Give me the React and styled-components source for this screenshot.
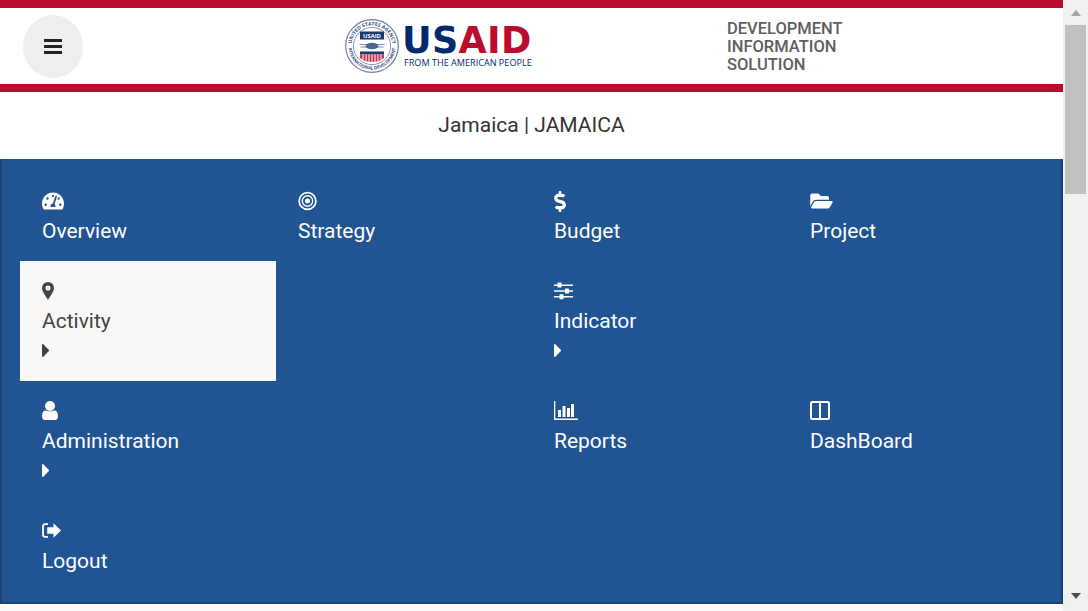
import React from 'react'
import styled, { createGlobalStyle } from 'styled-components'
import { FaTachometerAlt, FaDollarSign, FaFolderOpen } from 'react-icons/fa'

const GlobalStyle = createGlobalStyle`
  html, body {
    margin: 0;
    padding: 0;
    height: 100%;
    overflow: hidden;
    background: #fff;
    font-family: Roboto, "Liberation Sans", sans-serif;
  }
`

const Page = styled.div`
  display: flex;
  width: 1088px;
  height: 611px;
  overflow: hidden;
`

const Main = styled.main`
  width: 1063px;
  background: #fff;
`

const Header = styled.header`
  display: flex;
  align-items: center;
  height: 76px;
  border-top: 8px solid #ba0c2f;
  border-bottom: 8px solid #ba0c2f;
`

const MenuButton = styled.button`
  display: flex;
  align-items: center;
  justify-content: center;
  flex: none;
  width: 60px;
  height: 63px;
  margin-left: 23px;
  padding: 0;
  border: 0;
  border-radius: 50%;
  background: #eee;
`

const Logo = styled.div`
  display: flex;
  align-items: center;
  gap: 5px;
  width: 188px;
  margin-left: 262px;
`

const LogoWords = styled.div`
  display: flex;
  flex-direction: column;
  margin-top: 1px;
`

const LogoMark = styled.span`
  margin-left: -2px;
  font-family: "DejaVu Sans", "Liberation Sans", sans-serif;
  font-size: 36.5px;
  font-weight: 700;
  line-height: 32px;
  letter-spacing: 0.3px;
  color: #002a6c;

  b {
    font-weight: 700;
    color: #ba0c2f;
  }
`

const LogoTag = styled.span`
  font-family: "Open Sans", "Liberation Sans", sans-serif;
  font-size: 9.1px;
  line-height: 11px;
  white-space: nowrap;
  color: #002a6c;
`

const Solution = styled.div`
  width: 130px;
  margin-top: 2px;
  margin-left: 194px;
  font-size: 16.5px;
  font-weight: 500;
  line-height: 18px;
  color: #5e5e5e;
`

const Country = styled.h1`
  margin: 0;
  height: 67px;
  font-size: 21px;
  font-weight: 400;
  line-height: 66px;
  text-align: center;
  color: #333;
`

const Panel = styled.nav`
  display: grid;
  grid-template-columns: repeat(4, 256px);
  grid-auto-rows: auto;
  align-content: start;
  box-sizing: border-box;
  height: 445px;
  padding: 12px 0 0 18px;
  border: 2px solid #1a4273;
  border-top: 0;
  background: #205493;
`

const Footer = styled.div`
  height: 7px;
  background: #fafafa;
`

const Item = styled.a`
  display: flex;
  flex-direction: column;
  align-items: flex-start;
  grid-column: ${(p) => p.$col};
  box-sizing: border-box;
  padding: 20px 22px 15px;
  background: ${(p) => (p.$active ? '#f7f7f7' : 'transparent')};
  color: ${(p) => (p.$active ? '#444' : '#fff')};
`

const IconSlot = styled.span`
  display: flex;
  align-items: center;
  height: 20px;
`

const Label = styled.span`
  height: 30px;
  margin-top: 5px;
  font-size: 21px;
  line-height: 30px;
`

const Caret = styled.span`
  display: flex;
  align-items: center;
  height: 30px;
  margin: -1px 0 1px;
`

const Scrollbar = styled.aside`
  display: flex;
  flex-direction: column;
  align-items: center;
  width: 25px;
  height: 611px;
  background: #f1f1f1;
`

const ScrollArrow = styled.span`
  display: block;
  flex: none;
  width: 0;
  height: 0;
  margin: ${(p) => (p.$down ? '0' : '10px 0 0')};
  border-left: 5.5px solid transparent;
  border-right: 5.5px solid transparent;
  border-bottom: ${(p) => (p.$down ? '0' : '6px solid #a3a3a3')};
  border-top: ${(p) => (p.$down ? '6px solid #505050' : '0')};
`

const ScrollThumb = styled.span`
  display: block;
  flex: none;
  width: 21px;
  height: 169px;
  margin-top: 9px;
  margin-bottom: 399px;
  background: #c1c1c1;
`

const GaugeIcon = styled(FaTachometerAlt)`
  width: 22px;
  height: 20px;
`

const DollarIcon = styled(FaDollarSign)`
  flex: none;
  width: 12px;
  height: 21px;
`

const FolderIcon = styled(FaFolderOpen)`
  width: 23px;
  height: 20px;
`

const Seal = () => (
  <svg width="54" height="54" viewBox="0 0 54 54" aria-hidden="true">
    <defs>
      <path id="sealTop" d="M6.5 27a20.5 20.5 0 0 1 41 0" />
      <path id="sealBottom" d="M4.57 20A23.5 23.5 0 1 0 49.43 20" />
    </defs>
    <circle cx="27" cy="27" r="26.3" fill="#fff" stroke="#6d7f9d" strokeWidth="1.2" />
    <circle cx="27" cy="27" r="18.6" fill="#fff" stroke="#7b8aa8" strokeWidth="0.9" />
    <text fontFamily="Open Sans, sans-serif" fontSize="5" fontWeight="700" fill="#39507f">
      <textPath href="#sealTop" startOffset="50%" textAnchor="middle">UNITED STATES AGENCY</textPath>
    </text>
    <text fontFamily="Open Sans, sans-serif" fontSize="4.4" fontWeight="700" fill="#39507f">
      <textPath href="#sealBottom" startOffset="50%" textAnchor="middle">INTERNATIONAL DEVELOPMENT</textPath>
    </text>
    <rect x="15" y="12.5" width="24" height="8" fill="#1b3a72" />
    <text x="27" y="18.8" textAnchor="middle" fontFamily="Open Sans, sans-serif" fontSize="5.8" fontWeight="700" fill="#fff">USAID</text>
    <path d="M14.5 25.5h8M31.5 25.5h8M15.5 28h7M31.5 28h7" stroke="#7a8cab" strokeWidth="1" />
    <ellipse cx="27" cy="27" rx="6.5" ry="3.2" fill="#4d6591" />
    <rect x="15" y="32.5" width="24" height="3" fill="#1b3a72" />
    <path d="M15 35.5h24v3.5c-3 3-8 4-12 4s-9-1-12-4z" fill="#c8324d" />
    <path d="M18 35.5v6M21 35.5v7M24 35.5v7.5M27 35.5v7.5M30 35.5v7.5M33 35.5v7M36 35.5v6" stroke="#fff" strokeWidth="1" />
  </svg>
)

const BarsIcon = () => (
  <svg width="18" height="15" viewBox="0 0 18 15" aria-hidden="true">
    <path d="M0 1.5h18M0 7.5h18M0 13.5h18" stroke="#222" strokeWidth="3" />
  </svg>
)

const TargetIcon = () => (
  <svg width="19" height="20" viewBox="0 0 19 20" fill="none" stroke="currentColor" aria-hidden="true">
    <circle cx="9.500" cy="10" r="8.400" strokeWidth="1.700" />
    <circle cx="9.500" cy="10" r="5.200" strokeWidth="1.400" />
    <circle cx="9.500" cy="10" r="2.500" fill="currentColor" stroke="none" />
  </svg>
)

const PinIcon = () => (
  <svg width="12" height="18" viewBox="0 0 12 18" fill="currentColor" aria-hidden="true">
    <path
      fillRule="evenodd"
      d="M6 0a6 6 0 0 0-6 6c0 3.500 4 8.500 6 12 2-3.500 6-8.500 6-12a6 6 0 0 0-6-6zm0 3.400a2.600 2.600 0 1 1 0 5.200 2.600 2.600 0 0 1 0-5.200z"
    />
  </svg>
)

const SlidersIcon = () => (
  <svg width="19" height="18" viewBox="0 0 19 18" fill="currentColor" aria-hidden="true">
    <path d="M0 2.500h19v1.400H0zM0 8.300h19v1.400H0zM0 14.100h19v1.400H0z" />
    <rect x="3.500" y="0.600" width="4" height="5" rx="0.600" />
    <rect x="11" y="6.500" width="4" height="5" rx="0.600" />
    <rect x="5.500" y="12.300" width="4" height="5" rx="0.600" />
  </svg>
)

const ChartIcon = () => (
  <svg width="24" height="20" viewBox="0 0 24 20" fill="currentColor" aria-hidden="true">
    <path d="M0 0h1.300v17.500H24V19H0z" />
    <rect x="4" y="9" width="3" height="7" />
    <rect x="8.500" y="5" width="3" height="11" />
    <rect x="13" y="7" width="3" height="9" />
    <rect x="17" y="3" width="3" height="13" />
  </svg>
)

const ColumnsIcon = () => (
  <svg width="20" height="20" viewBox="0 0 20 20" fill="none" stroke="currentColor" strokeWidth="2" aria-hidden="true">
    <rect x="1" y="1" width="18" height="17" rx="1.500" />
    <path d="M10 1v17" />
  </svg>
)

const UserIcon = () => (
  <svg width="16" height="20" viewBox="0 0 16 20" fill="currentColor" aria-hidden="true">
    <circle cx="8" cy="5" r="5" />
    <path d="M3.400 9.200C5 10.600 11 10.600 12.600 9.200 15 9.600 16 12 16 15.600 16 17.600 14.800 19 13 19H3C1.200 19 0 17.600 0 15.600 0 12 1 9.600 3.400 9.200z" />
  </svg>
)

const LogoutIcon = () => (
  <svg width="19" height="16" viewBox="0 0 19 16" fill="currentColor" aria-hidden="true">
    <path d="M6 1.200H3A2 2 0 0 0 1 3.200v8.600a2 2 0 0 0 2 2h3" fill="none" stroke="currentColor" strokeWidth="1.800" />
    <path d="M11.500 0.200 19 7.500l-7.500 7.300v-4H5.200V4.200h6.300z" />
  </svg>
)

const CaretIcon = () => (
  <svg width="7" height="13" viewBox="0 0 7 13" fill="currentColor" aria-hidden="true">
    <path d="M0 .8C0 0 .8-.2 1.300.3L6.700 5.800c.4.4.4 1 0 1.400L1.300 12.700c-.5.5-1.300.3-1.300-.5z" />
  </svg>
)

const items = [
  { label: 'Overview', icon: <GaugeIcon /> },
  { label: 'Strategy', icon: <TargetIcon /> },
  { label: 'Budget', icon: <DollarIcon /> },
  { label: 'Project', icon: <FolderIcon /> },
  { label: 'Activity', icon: <PinIcon />, caret: true, active: true, col: 1 },
  { label: 'Indicator', icon: <SlidersIcon />, caret: true, col: 3 },
  { label: 'Administration', icon: <UserIcon />, caret: true, col: 1 },
  { label: 'Reports', icon: <ChartIcon />, col: 3 },
  { label: 'DashBoard', icon: <ColumnsIcon />, col: 4 },
  { label: 'Logout', icon: <LogoutIcon />, col: 1 },
]

export default function App() {
  return (
    <Page>
      <GlobalStyle />
      <Main>
        <Header>
          <MenuButton aria-label="Menu"><BarsIcon /></MenuButton>
          <Logo>
            <Seal />
            <LogoWords>
              <LogoMark>US<b>AID</b></LogoMark>
              <LogoTag>FROM THE AMERICAN PEOPLE</LogoTag>
            </LogoWords>
          </Logo>
          <Solution>DEVELOPMENT INFORMATION SOLUTION</Solution>
        </Header>
        <Country>Jamaica | JAMAICA</Country>
        <Panel>
          {items.map((item) => (
            <Item key={item.label} $active={item.active} $col={item.col || 'auto'}>
              <IconSlot>{item.icon}</IconSlot>
              <Label>{item.label}</Label>
              {item.caret && <Caret><CaretIcon /></Caret>}
            </Item>
          ))}
        </Panel>
        <Footer />
      </Main>
      <Scrollbar>
        <ScrollArrow />
        <ScrollThumb />
        <ScrollArrow $down />
      </Scrollbar>
    </Page>
  )
}
